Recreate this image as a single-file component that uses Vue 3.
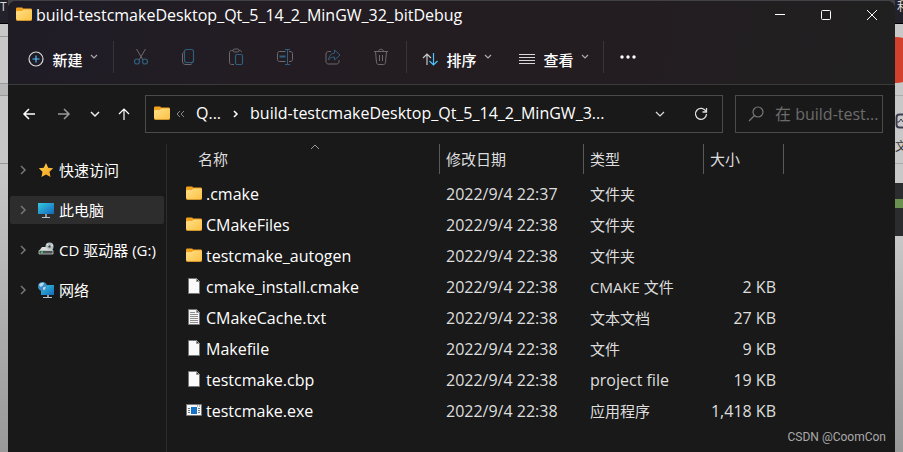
<script setup>
import { ref } from 'vue'

const places = [
  { icon: 'star', label: '快速访问' },
  { icon: 'pc', label: '此电脑', active: true },
  { icon: 'disc', label: 'CD 驱动器 (G:)' },
  { icon: 'net', label: '网络' },
]

const actions = [
  { id: 'cut', label: '剪切' },
  { id: 'copy', label: '复制' },
  { id: 'paste', label: '粘贴' },
  { id: 'rename', label: '重命名' },
  { id: 'share', label: '共享' },
  { id: 'delete', label: '删除' },
]

const files = [
  { icon: 'folder', name: '.cmake', date: '2022/9/4 22:37', type: '文件夹', size: '' },
  { icon: 'folder', name: 'CMakeFiles', date: '2022/9/4 22:38', type: '文件夹', size: '' },
  { icon: 'folder', name: 'testcmake_autogen', date: '2022/9/4 22:38', type: '文件夹', size: '' },
  { icon: 'file', name: 'cmake_install.cmake', date: '2022/9/4 22:38', type: 'CMAKE 文件', size: '2 KB' },
  { icon: 'text', name: 'CMakeCache.txt', date: '2022/9/4 22:38', type: '文本文档', size: '27 KB' },
  { icon: 'file', name: 'Makefile', date: '2022/9/4 22:38', type: '文件', size: '9 KB' },
  { icon: 'file', name: 'testcmake.cbp', date: '2022/9/4 22:38', type: 'project file', size: '19 KB' },
  { icon: 'exe', name: 'testcmake.exe', date: '2022/9/4 22:38', type: '应用程序', size: '1,418 KB' },
]

const query = ref('')
</script>

<template>
  <div class="desktop">
    <svg class="defs" width="0" height="0" aria-hidden="true">
      <defs>
        <linearGradient id="gFolder" x1="0" y1="0" x2="1" y2="1">
          <stop offset="0" stop-color="#ffe08a" />
          <stop offset="1" stop-color="#fcc142" />
        </linearGradient>
        <linearGradient id="gScreen" x1="0" y1="0" x2="1" y2="1">
          <stop offset="0" stop-color="#35c8dc" />
          <stop offset="1" stop-color="#1467bd" />
        </linearGradient>
        <linearGradient id="gStar" x1="0" y1="0" x2="1" y2="1">
          <stop offset="0" stop-color="#ffd34e" />
          <stop offset="1" stop-color="#f6a01c" />
        </linearGradient>
        <symbol id="i-folder" viewBox="0 0 16 16">
          <path d="M0 3c0-1 .4-1.500 1.500-1.500h4c.9 0 1.200.5 1.700 1H14c1.300 0 2 .4 2 1.500V6H0z" fill="#f3a21f" />
          <path d="M0 6.500C0 5.500.5 5 1.500 5h4c1 0 1.500-1.500 2.500-1.500h6.500c1 0 1.500.5 1.500 1.500v8c0 .8-.5 1.500-1.500 1.500h-13C.5 14.500 0 13.800 0 13z" fill="url(#gFolder)" />
          <path d="M0 13c0 .8.500 1.500 1.500 1.500h13c1 0 1.500-.7 1.500-1.500" fill="none" stroke="#e9a02a" stroke-width=".8" />
        </symbol>
        <symbol id="i-file" viewBox="0 0 16 16">
          <path d="M2.500.5h8l3 3v12h-11z" fill="#fafafa" stroke="#777" />
          <path d="M10.500.5v3h3z" fill="#333" stroke="#999" />
        </symbol>
        <symbol id="i-text" viewBox="0 0 16 16">
          <path d="M2.500.5h8l3 3v12h-11z" fill="#f4f4f4" stroke="#777" />
          <path d="M10.500.5v3h3z" fill="#555" stroke="#999" />
          <path d="M4 3.500h5M4 5.500h8M4 7.500h8M4 9.500h8M4 11.500h8M4 13.500h8" stroke="#8d8d8d" />
        </symbol>
        <symbol id="i-exe" viewBox="0 0 16 16">
          <path d="M.5 2.500h15v11H.5z" fill="#f6f6f6" stroke="#777" />
          <path d="M5 5h6v7H5z" fill="#1473c8" />
          <path d="M2 6.500h2M2 8.500h2M2 10.500h2M12 6.500h2M12 8.500h2M12 10.500h2M11 4h1M13 4h1" stroke="#777" />
        </symbol>
        <symbol id="i-star" viewBox="0 0 16 16">
          <path d="M8 1l2.200 4.700 5 .6-3.700 3.500 1 5.100L8 12.400l-4.500 2.500 1-5.100L.8 6.300l5-.6z" fill="url(#gStar)" />
        </symbol>
        <symbol id="i-pc" viewBox="0 0 16 16">
          <path d="M0 1h16v11H0z" fill="url(#gScreen)" />
          <path d="M7 12h2v3H7z" fill="#8d9aa5" />
          <path d="M4 15.500h8" stroke="#b9c3cb" />
        </symbol>
        <symbol id="i-disc" viewBox="0 0 16 16">
          <circle cx="11.500" cy="4.500" r="4" fill="#b5bfc3" />
          <path d="M9 2l2.500 2.500L15 3" fill="none" stroke="#e6ecee" />
          <circle cx="11.500" cy="4.500" r="1.200" fill="#444" />
          <path d="M4 5h4l2 2.500h4.500l.5 1.500H1z" fill="#d8dcdd" />
          <path d="M1 8.500h14v3.500H1z" fill="#4b5153" stroke="#c5caca" stroke-width=".8" />
          <path d="M3 10.300h2" stroke="#2fe05f" stroke-width="1.500" />
        </symbol>
        <symbol id="i-net" viewBox="0 0 16 16">
          <path d="M3 3h13v10H3z" fill="url(#gScreen)" />
          <path d="M9 13h2v2H9z" fill="#8d9aa5" />
          <path d="M5 15.500h9" stroke="#b9c3cb" />
          <circle cx="4.500" cy="4.500" r="4.500" fill="#3d8ec2" />
          <path d="M1 3c1-2 3-2.500 5-2L5 3.500 2.500 5zM5 5.500l3-1-1 3-2 .5z" fill="#b6dcee" />
        </symbol>
        <symbol id="i-down" viewBox="0 0 8 8"><path d="M1 2l3 3 3-3" fill="none" stroke="currentColor" stroke-width="1.200" /></symbol>
        <symbol id="i-right" viewBox="0 0 8 10"><path d="M2 1l4 4-4 4" fill="none" stroke="currentColor" stroke-width="1.500" /></symbol>
      </defs>
    </svg>

    <div class="behind behind-left" aria-hidden="true">
      <span class="cap">T</span>
      <span class="band b1"></span>
      <span class="band b2"></span>
      <span class="band b3"></span>
      <span class="band b4"></span>
      <span class="fade"></span>
    </div>

    <main class="window">
      <header class="chrome">
        <div class="titlebar">
          <svg class="ico" width="16" height="16"><use href="#i-folder" /></svg>
          <h1>build-testcmakeDesktop_Qt_5_14_2_MinGW_32_bitDebug</h1>
          <div class="controls">
            <button aria-label="最小化"><svg width="12" height="12"><path d="M1 5.500h10" stroke="#fff" /></svg></button>
            <button aria-label="最大化"><svg width="12" height="12"><rect x="1.500" y="1.500" width="9" height="9" rx="1" fill="none" stroke="#fff" /></svg></button>
            <button aria-label="关闭"><svg width="12" height="12"><path d="M1 1l10 10M11 1L1 11" stroke="#fff" /></svg></button>
          </div>
        </div>

        <div class="toolbar">
          <button class="cmd new">
            <svg width="16" height="16" fill="none">
              <circle cx="8" cy="8" r="7" stroke="#d8d8d8" stroke-width="1.200" />
              <path d="M8 4.500v7M4.500 8h7" stroke="#4cc2ff" stroke-width="1.200" />
            </svg>
            <span>新建</span>
            <svg class="chev" width="8" height="8"><use href="#i-down" /></svg>
          </button>
          <i class="rule"></i>
          <div class="actions">
            <button v-for="a in actions" :key="a.id" :aria-label="a.label" disabled>
              <svg width="18" height="18" fill="none" stroke="#6d696e">
                <template v-if="a.id === 'cut'">
                  <path d="M4.500 1l6.500 11M13.500 1L7 12" />
                  <g stroke="#2f5f7d" stroke-width="1.200"><circle cx="5" cy="13.500" r="2.500" /><circle cx="13" cy="13.500" r="2.500" /></g>
                </template>
                <template v-else-if="a.id === 'copy'">
                  <path d="M4 4c-1 .5-1.500 1-1.500 2v7c0 2.500 1 3.500 3.500 3.500h4c1 0 1.800-.5 2.200-1.200" />
                  <rect x="4.500" y="1.500" width="9" height="13" rx="2" stroke="#2f5f7d" stroke-width="1.200" />
                </template>
                <template v-else-if="a.id === 'paste'">
                  <path d="M5 2.500H3.500c-1 0-2 .8-2 2v10c0 1.200.8 2 2 2H6M11 2.500h1c1 0 1.500.8 1.500 1.800" />
                  <rect x="5" y="1" width="6" height="3" rx="1.500" />
                  <rect x="7.500" y="6.500" width="7" height="10" rx="1.500" stroke="#2f5f7d" stroke-width="1.200" />
                </template>
                <template v-else-if="a.id === 'rename'">
                  <path d="M9.500 3.500h-6c-1.200 0-2 .8-2 2v6c0 1.200.8 2 2 2h6M13 3.500h1c1.500 0 2.500.8 2.500 2v6c0 1.200-1 2-2.500 2h-1" />
                  <path d="M3.500 8.500h6" stroke="#2f5f7d" stroke-width="2" />
                  <path d="M9 1.500h5M9 16.500h5M11.500 1.500v15" stroke="#2f5f7d" />
                </template>
                <template v-else-if="a.id === 'share'">
                  <path d="M7 3.500H4.500c-1.500 0-2.500 1-2.500 2.500v7.500C2 15 3 16 4.500 16h8c1.500 0 2.500-1 2.500-2.500V12" />
                  <path d="M10.500 2l5.500 5-5.500 5V9c-3 0-4.500.8-6 3 .3-4 2.500-6.500 6-7z" stroke="#2f5f7d" />
                </template>
                <template v-else>
                  <path d="M2 3.500h14M6.500 3.500c0-3 5-3 5 0M3.500 3.500l1 11c.1 1 .8 2 2 2h5c1.200 0 1.900-1 2-2l1-11M7.500 7v6M10.500 7v6" />
                </template>
              </svg>
            </button>
          </div>
          <i class="rule"></i>
          <button class="cmd sort">
            <svg width="16" height="16" fill="none" stroke-width="1.200">
              <path d="M5 14V3M1 7l4-4 4 4" stroke="#c8c8c8" />
              <path d="M11.500 2v12M7.500 10l4 4 4-4" stroke="#4cc2ff" />
            </svg>
            <span>排序</span>
            <svg class="chev" width="8" height="8"><use href="#i-down" /></svg>
          </button>
          <button class="cmd view">
            <svg width="16" height="16"><path d="M0 3.500h16M0 6.500h16M0 9.500h16M0 12.500h16" stroke="#d8d8d8" /></svg>
            <span>查看</span>
            <svg class="chev" width="8" height="8"><use href="#i-down" /></svg>
          </button>
          <i class="rule"></i>
          <button class="more" aria-label="更多">
            <svg width="18" height="6" fill="#fff"><circle cx="3" cy="3" r="1.700" /><circle cx="9" cy="3" r="1.700" /><circle cx="15" cy="3" r="1.700" /></svg>
          </button>
        </div>
      </header>

      <div class="nav">
        <div class="history">
          <button class="back" aria-label="后退"><svg width="14" height="14"><path d="M13 7H2M7 2L2 7l5 5" fill="none" stroke="#fff" stroke-width="1.500" /></svg></button>
          <button class="forward" aria-label="前进" disabled><svg width="14" height="14"><path d="M1 7h11M7 2l5 5-5 5" fill="none" stroke="#999" stroke-width="1.500" /></svg></button>
          <button class="recent" aria-label="最近位置"><svg width="10" height="8"><path d="M1 2l4 4 4-4" fill="none" stroke="#eee" stroke-width="1.500" /></svg></button>
          <button class="up" aria-label="上移"><svg width="14" height="14"><path d="M7 13V2M2 7l5-5 5 5" fill="none" stroke="#fff" stroke-width="1.200" /></svg></button>
        </div>
        <nav class="address" aria-label="地址">
          <svg class="ico" width="16" height="16"><use href="#i-folder" /></svg>
          <button class="dbl" aria-label="更多路径"><svg width="10" height="8"><path d="M4 1L1 4l3 3M8 1L5 4l3 3" fill="none" stroke="#8a8a8a" /></svg></button>
          <button class="crumb short">Q...</button>
          <svg class="sep" width="6" height="8" viewBox="0 0 6 8"><path d="M1 1l3 3-3 3" fill="none" stroke="#fff" stroke-width="1.500" /></svg>
          <button class="crumb long">build-testcmakeDesktop_Qt_5_14_2_MinGW_3...</button>
          <button class="drop" aria-label="展开"><svg width="10" height="8"><path d="M1 2l4 4 4-4" fill="none" stroke="#ddd" stroke-width="1.200" /></svg></button>
          <button class="reload" aria-label="刷新">
            <svg width="14" height="14" fill="none" stroke="#ddd" stroke-width="1.300"><path d="M12 4.500A5.500 5.500 0 1 0 12.500 7M12.500 1v4h-4" /></svg>
          </button>
        </nav>
        <label class="search">
          <svg width="16" height="16" fill="none" stroke="#777" stroke-width="1.200"><circle cx="10" cy="6" r="5" /><path d="M6.500 9.500L1 15" /></svg>
          <input v-model="query" type="text" placeholder="在 build-test..." aria-label="搜索" />
        </label>
      </div>

      <div class="content">
        <nav class="places" aria-label="位置">
          <a v-for="p in places" :key="p.label" href="#" :class="{ active: p.active }">
            <svg class="tw" width="8" height="10"><use href="#i-right" /></svg>
            <svg width="16" height="16"><use :href="'#i-' + p.icon" /></svg>
            <span>{{ p.label }}</span>
          </a>
        </nav>

        <table>
          <colgroup>
            <col class="c-name" /><col class="c-date" /><col class="c-type" /><col class="c-size" />
          </colgroup>
          <thead>
            <tr>
              <th class="first" aria-sort="ascending">名称
                <svg class="asc" width="10" height="6"><path d="M1 5l4-4 4 4" fill="none" stroke="#999" /></svg>
              </th>
              <th>修改日期</th>
              <th>类型</th>
              <th>大小</th>
            </tr>
          </thead>
          <tbody>
            <tr v-for="f in files" :key="f.name">
              <td class="name"><div><svg width="16" height="16"><use :href="'#i-' + f.icon" /></svg><span>{{ f.name }}</span></div></td>
              <td>{{ f.date }}</td>
              <td :class="{ zh: /[^\x00-\x7f]/.test(f.type) }">{{ f.type }}</td>
              <td class="size">{{ f.size }}</td>
            </tr>
          </tbody>
        </table>
      </div>
      <p class="mark">CSDN @CoomCon</p>
    </main>

    <div class="behind behind-right" aria-hidden="true">
      <span class="cap">利</span>
      <span class="badge"><span class="dot"></span></span>
      <span class="card"><svg width="8" height="18" fill="none" stroke="#3a3c4e"><path d="M8 1.500H4.500c-2 0-3 1-3 3v7c0 2 1 3 3 3H8" stroke-width="2" /><path d="M2 9h2l2-3 2 3" /></svg></span>
      <span class="glyph">文</span>
      <span class="blank"></span>
      <span class="dark d1"></span>
      <span class="green"></span>
      <span class="dark d2"></span>
      <span class="fade"></span>
    </div>
  </div>
</template>

<style>
body {
  margin: 0;
  background: #424246;
}
</style>

<style scoped>
.desktop {
  display: grid;
  grid-template-columns: 8px minmax(0, 1fr) 8px;
  min-height: 100vh;
  overflow: hidden;
  font-family: "Open Sans", "Noto Sans CJK SC", sans-serif;
  font-size: 16px;
  color: #fff;
}
.defs { position: absolute; }
svg { flex: none; display: block; }
button {
  display: flex;
  align-items: center;
  justify-content: center;
  padding: 0;
  border: 0;
  background: none;
  color: inherit;
  font: inherit;
}

.behind {
  display: flex;
  flex-direction: column;
  overflow: hidden;
  background: #c8c8c8;
}
.behind > * { flex: none; box-sizing: border-box; }
.behind .cap {
  height: 24px;
  overflow: hidden;
  background: #23222a;
  color: #ddd;
  font-size: 12px;
  line-height: 14px;
  border-bottom: 1px solid #000;
}
.behind-right .cap { padding-left: 2px; }
.behind .fade {
  flex: 1;
  background: linear-gradient(#c8c8c8, #aaa 60%, #999);
}
.band { border-bottom: 1px solid #999; }
.b1 { height: 13px; }
.b2 { height: 47px; }
.b3 { height: 12px; background: #b8b8b8; }
.b4 { height: 68px; }
.badge { height: 71px; padding-top: 13px; overflow: hidden; }
.dot {
  display: block;
  width: 46px;
  height: 46px;
  margin-left: -22px;
  border-radius: 50%;
  background: #d3412c;
}
.card { height: 44px; padding-top: 17px; border-top: 1px solid #aaa; }
.glyph {
  height: 25px;
  overflow: hidden;
  color: #333;
  font-size: 12px;
  line-height: 16px;
  border-bottom: 1px solid #aaa;
}
.blank { height: 19px; }
.dark { background: #2b2c2e; }
.d1 { height: 16px; }
.green { height: 9px; background: #6b9150; }
.d2 { height: 28px; }

.window {
  position: relative;
  display: flex;
  flex-direction: column;
  margin-top: 1px;
  border-radius: 8px 8px 0 0;
  overflow: hidden;
  background: #191919;
}
.chrome {
  background: linear-gradient(100deg, #1f1c26, #231d23 30%, #231d21 70%, #202020);
  border-bottom: 1px solid #3a3a38;
}
.titlebar {
  display: flex;
  align-items: center;
  height: 28px;
  padding-left: 8px;
}
.titlebar .ico { margin-bottom: 2px; }
h1 {
  flex: 1;
  min-width: 0;
  margin: 0 0 0 4px;
  font-size: 16px;
  font-weight: 400;
  line-height: 28px;
  white-space: nowrap;
  overflow: hidden;
}
.controls { display: flex; }
.controls button { width: 46px; height: 28px; }

.toolbar {
  display: flex;
  align-items: center;
  height: 55px;
  padding-top: 1px;
  box-sizing: border-box;
  font-size: 15px;
}
.cmd { height: 32px; white-space: nowrap; font-weight: 500; padding-top: 4px; box-sizing: border-box; }
.cmd span { margin: 0 7px 0 8px; }
.chev { color: #aaa; margin-bottom: 4px; }
.new { width: 105px; padding-left: 5px; }
.rule { width: 1px; height: 32px; background: #383439; }
.actions { display: flex; padding: 0 1px 0 3px; }
.actions button { width: 48px; height: 32px; }
.sort { width: 100px; }
.view { width: 96px; padding-right: 2px; }
.more { width: 48px; height: 32px; }

.nav {
  display: flex;
  align-items: center;
  padding: 10px 12px 11px 4px;
}
.history { display: flex; flex: none; margin-right: 5px; }
.history button { height: 36px; }
.back { width: 34px; }
.forward { width: 36px; }
.recent { width: 26px; }
.up { width: 32px; }
.address, .search {
  display: flex;
  align-items: center;
  height: 38px;
  box-sizing: border-box;
  border: 1px solid #4b4b4b;
}
.address { flex: 1; min-width: 0; padding-left: 8px; }
.address .ico { margin-bottom: 2px; }
.dbl { width: 22px; height: 30px; }
.crumb { height: 30px; padding-bottom: 2px; white-space: nowrap; }
.short { margin: 0 12px 0 4px; }
.sep { margin-right: 11px; }
.long { flex: 1; min-width: 0; justify-content: flex-start; overflow: hidden; }
.drop { width: 40px; height: 36px; }
.reload { width: 42px; height: 36px; }
.search { width: 148px; flex: none; margin-left: 12px; padding: 0 0 0 12px; gap: 11px; }
.search input {
  flex: 1;
  min-width: 0;
  height: 30px;
  padding: 0;
  border: 0;
  outline: 0;
  background: none;
  color: #fff;
  font: inherit;
}
.search input::placeholder { color: #6c6c6c; opacity: 1; }

.content { display: flex; flex: 1; align-items: stretch; }
.places {
  width: 159px;
  flex: none;
  box-sizing: border-box;
  display: flex;
  flex-direction: column;
  gap: 12px;
  padding: 12px 2px 0;
  border-right: 1px solid #2c2c2c;
}
.places a {
  display: flex;
  align-items: center;
  height: 28px;
  padding-left: 9px;
  border-radius: 2px;
  color: #fff;
  font-size: 15px;
  text-decoration: none;
  white-space: nowrap;
}
.places a.active { background: #2d2d2d; }
.tw { margin-right: 11px; color: #777; }
.places span { margin-left: 5px; padding-bottom: 2px; }

table {
  table-layout: fixed;
  width: 617px;
  align-self: flex-start;
  border-collapse: separate;
  border-spacing: 0;
  color: #dedede;
}
.c-name { width: 273px; }
.c-date { width: 144px; }
.c-type { width: 120px; }
.c-size { width: 80px; }
thead::after { content: ""; display: block; height: 4px; }
th {
  position: relative;
  height: 30px;
  padding: 0 0 0 6px;
  border-right: 1px solid #5a5a5a;
  font-size: 15px;
  font-weight: 400;
  line-height: 20px;
  text-align: left;
}
th.first { padding-left: 31px; }
.asc { position: absolute; top: 0; left: 143px; }
td {
  height: 31px;
  padding: 0 0 0 6px;
  line-height: 20px;
  white-space: nowrap;
}
td.zh { font-size: 15px; }
td.name { padding-left: 19px; color: #fff; }
td.name div { display: flex; align-items: center; gap: 4px; }
td.name svg { margin-bottom: 2px; }
td.size { padding-right: 8px; text-align: right; }

.mark {
  position: absolute;
  right: 9px;
  bottom: 7px;
  margin: 0;
  color: #aaa;
  font-family: Roboto, sans-serif;
  font-size: 12px;
  line-height: 16px;
}
</style>
